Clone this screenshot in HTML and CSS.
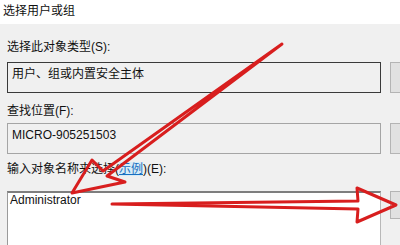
FILE: index.html
```html
<!DOCTYPE html>
<html lang="zh-CN">
<head>
    <meta charset="UTF-8">
    <title>选择用户或组</title>
    <link rel="stylesheet" href="styles.css">
</head>
<body>
    <div class="dialog">
        <div class="title">选择用户或组</div>
        <div class="content">
            <div class="label first">选择此对象类型(S):</div>
            <div class="row">
                <div class="field dark">用户、组或内置安全主体</div>
                <div class="btn"></div>
            </div>

            <div class="label second">查找位置(F):</div>
            <div class="row">
                <div class="field">MICRO-905251503</div>
                <div class="btn"></div>
            </div>

            <div class="label third">输入对象名称来选择(<a class="link">示例</a>)(E):</div>
            <div class="row">
                <div class="names">Administrator</div>
                <div class="btn short"></div>
            </div>
        </div>

        <!-- red marker arrows drawn over the dialog -->
        <svg class="marks" width="400" height="245" viewBox="0 0 400 245">
            <polygon points="72,193 92,160 103,171 282,44 107,176 125,182" />
            <polygon points="112,204 358,201 357,188 396,205 357,222 358,209" />
        </svg>
    </div>
</body>
</html>
```

FILE: styles.css
```css
* {
    box-sizing: border-box;
    margin: 0;
    padding: 0;
}

body {
    width: 400px;
    height: 245px;
    overflow: hidden;
    background: #f0f0f0;
    font-family: "Liberation Sans", "Noto Sans CJK SC", sans-serif;
    font-size: 12px;
    color: #111;
}

.dialog {
    position: relative;
    height: 245px;
    overflow: hidden;
}

.title {
    height: 24px;
    line-height: 22px;
    padding-left: 3px;
    background: #fff;
}

.content {
    padding-left: 7px;
}

.label {
    line-height: 16px;
}

.label.first {
    margin-top: 15px;
    margin-bottom: 7px;
}

.label.second {
    margin-top: 10px;
    margin-bottom: 4px;
}

.label.third {
    margin-top: 7px;
    margin-bottom: 14px;
}

.link {
    color: #1a6fc0;
    text-decoration: underline;
    background: #d6ecf7;
}

.row {
    display: flex;
    gap: 9px;
}

.field {
    flex-shrink: 0;
    width: 374px;
    height: 31px;
    padding: 3px 4px 0;
    line-height: 16px;
    border: 1px solid #a5a5a5;
    background: #f0f0f0;
}

.field.dark {
    border-color: #3a3a3a;
}

.names {
    flex-shrink: 0;
    width: 374px;
    height: 54px;
    padding-left: 2px;
    line-height: 14px;
    border: 1px solid #b8b8b8;
    border-top: 2px solid #7e7e7e;
    border-left-color: #9a9a9a;
    border-bottom: none;
    background: #fff;
}

.btn {
    flex-shrink: 0;
    width: 30px;
    height: 31px;
    border: 1px solid #b4b4b4;
    background: #e1e1e1;
}

.btn.short {
    height: 28px;
}

.marks {
    position: absolute;
    top: 0;
    left: 0;
}

.marks polygon {
    fill: none;
    stroke: #d81e1e;
    stroke-width: 3;
    stroke-linejoin: round;
}
```
